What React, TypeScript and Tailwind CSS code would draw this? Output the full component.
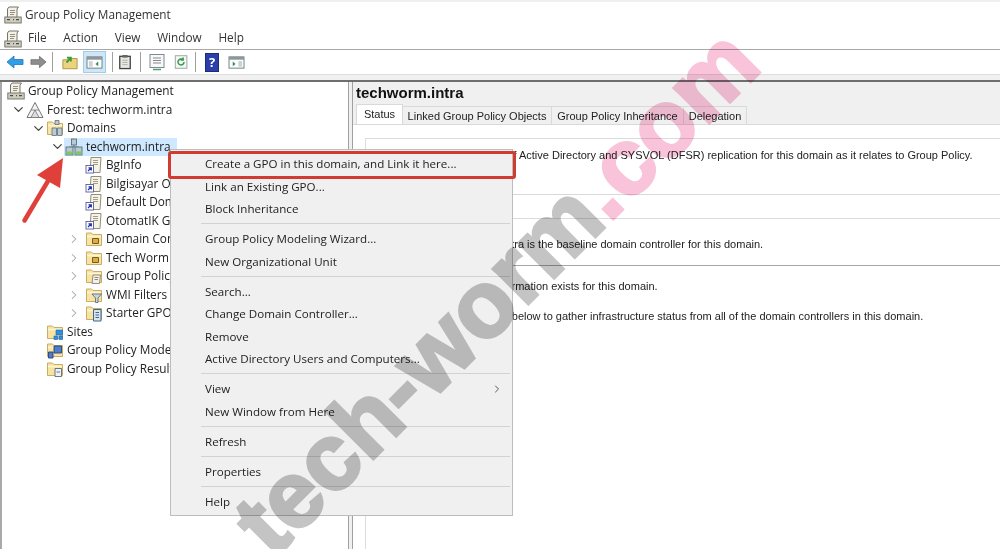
import React from 'react';
import { ChevronDown, ChevronRight } from 'lucide-react';

const uiFont = { fontFamily: '"Open Sans", "Noto Sans", sans-serif' };
const tightFont = { fontFamily: '"Liberation Sans", Arial, sans-serif' };

const Paper: React.FC<{ className?: string }> = ({ className }) => (
  <svg viewBox="0 0 18 18" className={className ?? 'w-[18px] h-[18px] shrink-0'}>
    <path d="M5 1h9.5l-1.5 2v9H3.5V3z" fill="#f4f1e4" stroke="#77756a" strokeWidth="1" />
    <path d="M6 4.5h5M6 6.5h5M6 8.5h4" stroke="#77756a" strokeWidth="0.8" />
    <rect x="0.8" y="11" width="16.4" height="6" fill="#cfccbf" stroke="#6f6f68" strokeWidth="0.9" />
    <path d="M3 13.7h3M9 13.7h1M12 13.7h3" stroke="#4c4c47" strokeWidth="1.3" />
  </svg>
);

const Forest = () => (
  <svg viewBox="0 0 18 18" className="w-[18px] h-[18px] shrink-0">
    <path d="M9 1.5L17 16.5H1z" fill="#f3f3f3" stroke="#77777a" strokeWidth="1" />
    <path d="M9 9L5 16.5h8zM5 9h8" fill="#dcdcdc" stroke="#77777a" strokeWidth="0.8" />
  </svg>
);

const Folder: React.FC<{ badge?: 'server' | 'box' | 'doc' | 'filter' | 'starter' | 'sites' | 'model' | 'result' }> = ({ badge }) => (
  <svg viewBox="0 0 18 18" className="w-[18px] h-[18px] shrink-0">
    <path d="M1.5 15.5V3h5l1.5 1.5h8.5v11z" fill="#f7e3a4" stroke="#c9ad62" strokeWidth="1" />
    <path d="M2 6.5h14" stroke="#fdf4d2" strokeWidth="1.5" />
    {badge === 'server' && <path d="M9 1.5h4v4H9zM6 9h4.5v7.5H6zM11.5 9H16v7.5h-4.5z" fill="#b8cbd6" stroke="#5f6f78" strokeWidth="0.8" />}
    {badge === 'box' && <path d="M7.5 8.5h6v5h-6z" fill="#d8ad4d" stroke="#7b5c1b" strokeWidth="1" />}
    {badge === 'doc' && <path d="M8 8h7.5l-1 8.5H7zM9.5 10.5h4M9.5 12.5h3.5" fill="#f3f1e6" stroke="#75736a" strokeWidth="0.8" />}
    {badge === 'filter' && <path d="M7 8h9.5l-3.5 4v4.5h-2.5V12z" fill="#c7d7e2" stroke="#60717d" strokeWidth="0.9" />}
    {badge === 'starter' && <path d="M8.5 5.5H16V17H8.5zM10.5 8.5h3.5M10.5 11h3.5M10.5 13.5h3.5" fill="#d6e4f2" stroke="#40658c" strokeWidth="1" />}
    {badge === 'sites' && <path d="M10 7h6.5v5H10zM8 13h3.5v3.5H8zM13 13h3.5v3.5H13z" fill="#2f8fe0" stroke="#1b66ad" strokeWidth="0.6" />}
    {badge === 'model' && <path d="M8 5h7.5v7H8zM2.5 11H7v6H2.5z" fill="#4c7fc4" stroke="#2c3e77" strokeWidth="0.9" />}
    {badge === 'result' && <path d="M9 8.5h6.5v8H9zM10.5 12h3.5" fill="#eef1f5" stroke="#5a6a7a" strokeWidth="0.9" />}
  </svg>
);

const DomainIcon = () => (
  <svg viewBox="0 0 18 18" className="w-[18px] h-[18px] shrink-0">
    <rect x="6.5" y="1" width="5" height="6" fill="#b9c9d4" stroke="#52626b" strokeWidth="0.8" />
    <path d="M9 7v2M4.5 9h9" stroke="#52626b" strokeWidth="0.8" />
    <rect x="1" y="9" width="7" height="8" fill="#b9c9d4" stroke="#52626b" strokeWidth="0.8" />
    <rect x="10" y="9" width="7" height="8" fill="#b9c9d4" stroke="#52626b" strokeWidth="0.8" />
    <rect x="1.5" y="13.5" width="6" height="3" fill="#7ecb5a" />
    <rect x="10.5" y="13.5" width="6" height="3" fill="#7ecb5a" />
  </svg>
);

const GpoLink = () => (
  <svg viewBox="0 0 18 18" className="w-[18px] h-[18px] shrink-0">
    <path d="M6 1.5h10l-1 15H5z" fill="#f6f3e4" stroke="#86836f" strokeWidth="0.9" />
    <path d="M8 4.5h5M8 6.5h5M8 8.5h5" stroke="#8a8878" strokeWidth="0.8" />
    <rect x="1" y="9.5" width="7.5" height="7.5" fill="#fff" stroke="#5a5aa0" strokeWidth="0.9" />
    <path d="M3 15l3-3M3.5 11.8H6.3V14.6" fill="none" stroke="#1c2fa6" strokeWidth="1.2" />
  </svg>
);

const Chevron: React.FC<{ open?: boolean }> = ({ open }) =>
  open ? (
    <span className="w-[16px] shrink-0 flex items-center justify-center">
      <ChevronDown size={15} strokeWidth={2} color="#444" />
    </span>
  ) : (
    <span className="w-[19px] shrink-0 flex items-center pl-[1px]">
      <ChevronRight size={14} strokeWidth={1.8} color="#a6a6a6" />
    </span>
  );

type TreeRow = { label: string; depth: number; chevron?: 'open' | 'closed'; icon: React.ReactNode; selected?: boolean };

const treeRows: TreeRow[] = [
  { label: 'Group Policy Management', depth: 5, icon: <Paper /> },
  { label: 'Forest: techworm.intra', depth: 8, chevron: 'open', icon: <Forest /> },
  { label: 'Domains', depth: 28, chevron: 'open', icon: <Folder badge="server" /> },
  { label: 'techworm.intra', depth: 47, chevron: 'open', icon: <DomainIcon />, selected: true },
  { label: 'BgInfo', depth: 83, icon: <GpoLink /> },
  { label: 'Bilgisayar Ortamı', depth: 83, icon: <GpoLink /> },
  { label: 'Default Domain Policy', depth: 83, icon: <GpoLink /> },
  { label: 'OtomatIK Guncelleme', depth: 83, icon: <GpoLink /> },
  { label: 'Domain Controllers', depth: 64, chevron: 'closed', icon: <Folder badge="box" /> },
  { label: 'Tech Worm', depth: 64, chevron: 'closed', icon: <Folder badge="box" /> },
  { label: 'Group Policy Objects', depth: 64, chevron: 'closed', icon: <Folder badge="doc" /> },
  { label: 'WMI Filters', depth: 64, chevron: 'closed', icon: <Folder badge="filter" /> },
  { label: 'Starter GPOs', depth: 64, chevron: 'closed', icon: <Folder badge="starter" /> },
  { label: 'Sites', depth: 44, icon: <Folder badge="sites" /> },
  { label: 'Group Policy Modeling', depth: 44, icon: <Folder badge="model" /> },
  { label: 'Group Policy Results', depth: 44, icon: <Folder badge="result" /> },
];

const menuItems: (string | null)[] = [
  'Create a GPO in this domain, and Link it here...',
  'Link an Existing GPO...',
  'Block Inheritance',
  null,
  'Group Policy Modeling Wizard...',
  'New Organizational Unit',
  null,
  'Search...',
  'Change Domain Controller...',
  'Remove',
  'Active Directory Users and Computers...',
  null,
  'View',
  'New Window from Here',
  null,
  'Refresh',
  null,
  'Properties',
  null,
  'Help',
];

const ToolSep: React.FC<{ className: string }> = ({ className }) => <div className={`w-px h-[20px] bg-[#a0a0a0] ${className}`} />;

const Toolbar = () => (
  <div className="h-[24px] flex items-center pl-[6px] bg-white shrink-0">
    <svg viewBox="0 0 18 14" className="w-[18px] h-[16px]">
      <path d="M8 1L1 7l7 6V9.5h9v-5H8z" fill="#2f9ee8" stroke="#2275b5" strokeWidth="0.8" strokeLinejoin="round" />
    </svg>
    <svg viewBox="0 0 18 14" className="w-[17px] h-[16px] ml-[6px]">
      <path d="M10 1l7 6-7 6V9.5H1v-5h9z" fill="#8e8e8e" stroke="#6d6d6d" strokeWidth="0.8" strokeLinejoin="round" />
    </svg>
    <ToolSep className="ml-[5px]" />
    <svg viewBox="0 0 18 18" className="w-[16px] h-[17px] ml-[9px]">
      <path d="M1 16V6h5l1-1.5h10V16z" fill="#ecd37e" stroke="#a98f3e" />
      <path d="M5 9l5-5M10 8V3.5H5.5" fill="none" stroke="#3d9a3a" strokeWidth="2" />
    </svg>
    <div className="w-[23px] h-[22px] ml-[5px] bg-[#cfe6f7] border border-[#9fcdee] flex items-center justify-center">
      <svg viewBox="0 0 18 16" className="w-[17px] h-[15px]">
        <rect x="1" y="2" width="16" height="12" fill="#fff" stroke="#6f7a80" />
        <rect x="1" y="2" width="16" height="3" fill="#8d979c" />
        <rect x="3" y="6.5" width="4" height="6" fill="#c9d2d6" />
        <path d="M13 7v5l-3-2.5z" fill="#2f8f5a" />
      </svg>
    </div>
    <ToolSep className="ml-[6px]" />
    <svg viewBox="0 0 16 18" className="w-[14px] h-[18px] ml-[5px]">
      <rect x="2" y="2.5" width="12" height="14" fill="#e9e7e2" stroke="#444" strokeWidth="1.5" />
      <path d="M5 7h6M5 9.5h6M5 12h6" stroke="#9a9a9a" strokeWidth="0.8" />
      <rect x="5" y="1" width="6" height="3" fill="#666" />
    </svg>
    <ToolSep className="ml-[8px]" />
    <svg viewBox="0 0 18 18" className="w-[18px] h-[18px] ml-[7px]">
      <rect x="2" y="1.5" width="14" height="13" fill="#f8f8f8" stroke="#7b8b94" />
      <path d="M5 5h8M5 7.5h8M5 10h8" stroke="#8a8a8a" />
      <path d="M5 16.5h8" stroke="#4aa06a" strokeWidth="1.5" />
    </svg>
    <svg viewBox="0 0 18 18" className="w-[15px] h-[18px] ml-[8px]">
      <rect x="1.5" y="1.5" width="14" height="15" fill="#f6f6f6" stroke="#8b9a93" />
      <path d="M12 9a3.6 3.6 0 1 1-1.2-2.7M11 3.5v3H8" fill="none" stroke="#2f9a46" strokeWidth="1.7" />
    </svg>
    <ToolSep className="ml-[6px]" />
    <div className="w-[14px] h-[19px] ml-[9px] bg-[#2b3fa8] border border-[#1c2a78] flex items-center justify-center text-white text-[13px] font-bold leading-none">?</div>
    <svg viewBox="0 0 18 16" className="w-[17px] h-[15px] ml-[9px]">
      <rect x="1" y="2" width="16" height="12" fill="#fff" stroke="#6f7a80" />
      <rect x="1" y="2" width="16" height="3" fill="#8d979c" />
      <rect x="11" y="6.5" width="4" height="6" fill="#c9d2d6" />
      <path d="M5 7v5l3-2.5z" fill="#2f8f5a" />
    </svg>
  </div>
);

const App: React.FC = () => {
  return (
    <div className="relative w-[1000px] h-[549px] overflow-hidden bg-white text-[11.8px] text-[#222]" style={uiFont}>
      <div className="h-[2px] bg-[#efefef]" />
      {/* title + menu */}
      <div className="h-[26px] flex items-center pl-[4px] gap-[3px] text-[#333]">
        <Paper />
        <span>Group Policy Management</span>
      </div>
      <div className="h-[22px] flex items-center pl-[4px] border-b border-[#a8a8a8]">
        <Paper />
        <div className="flex ml-[6px] gap-[16.7px] text-[#333] -mt-[2px]">
          <span>File</span>
          <span>Action</span>
          <span>View</span>
          <span>Window</span>
          <span>Help</span>
        </div>
      </div>
      <Toolbar />
      <div className="h-[8px] bg-[#f0f0f0] border-t border-[#dedede] border-b-2 border-b-[#6e6e6e]" />

      <div className="flex h-[467px]">
        {/* tree */}
        <div className="w-[349px] border-l-2 border-[#a9a9a9] border-r border-r-[#a0a0a0] overflow-hidden shrink-0">
          {treeRows.map((row) => (
            <div key={row.label} className="h-[18.5px] flex items-center whitespace-nowrap" style={{ paddingLeft: row.depth }}>
              {row.chevron && <Chevron open={row.chevron === 'open'} />}
              <div className={`flex items-center ${row.selected ? 'bg-[#cde8ff] h-[18px] pr-[6px] -ml-[1px] pl-[1px]' : ''}`}>
                {row.icon}
                <span className="ml-[3px]">{row.label}</span>
              </div>
            </div>
          ))}
        </div>
        <div className="w-[3px] bg-[#f0f0f0] shrink-0" />
        {/* details */}
        <div className="flex-1 border-l border-[#a0a0a0] flex flex-col min-w-0" style={tightFont}>
          <div className="h-[24px] pl-[3px] pb-[2px] flex items-center bg-[#f0f0f0] text-[15px] font-bold text-[#111] shrink-0">techworm.intra</div>
          <div className="h-[19px] bg-[#f0f0f0] flex items-end pl-[3px] border-b border-[#d9d9d9] shrink-0 text-[11px] whitespace-nowrap">
            <div className="h-[20px] w-[47px] bg-white border border-[#d9d9d9] border-b-0 flex items-center justify-center">Status</div>
            <div className="h-[18px] w-[149px] bg-[#f0f0f0] border-t border-r border-[#d9d9d9] flex items-center justify-center pt-[2px]">Linked Group Policy Objects</div>
            <div className="h-[18px] w-[132px] bg-[#f0f0f0] border-t border-r border-[#d9d9d9] flex items-center justify-center pt-[2px]">Group Policy Inheritance</div>
            <div className="h-[18px] w-[63px] bg-[#f0f0f0] border-t border-r border-[#d9d9d9] flex items-center justify-center pt-[2px]">Delegation</div>
          </div>
          <div className="relative flex-1 text-[11px]">
            <div className="absolute left-[12px] right-0 top-[13px] h-[412px] border-l border-t border-[#dcdcdc]">
              <div className="absolute left-[5px] top-[8px] whitespace-nowrap">This page shows the status of Active Directory and SYSVOL (DFSR) replication for this domain as it relates to Group Policy.</div>
              <div className="absolute left-0 right-0 top-[55px] h-px bg-[#d9d9d9]" />
              <div className="absolute left-0 right-0 top-[79px] h-px bg-[#dcdcdc]" />
              <div className="absolute left-[59px] top-[97px] whitespace-nowrap">dc01.techworm.intra is the baseline domain controller for this domain.</div>
              <div className="absolute left-0 right-0 top-[126px] h-px bg-[#a6a6a6]" />
              <div className="absolute left-[11px] top-[139px] whitespace-nowrap">No infrastructure status information exists for this domain.</div>
              <div className="absolute left-[7px] top-[169px] whitespace-nowrap">Click the Detect Now button below to gather infrastructure status from all of the domain controllers in this domain.</div>
            </div>
          </div>
        </div>
      </div>

      {/* context menu */}
      <div className="absolute left-[170px] top-[149px] w-[343px] h-[367px] bg-[#f0f0f0] border border-[#bdbdbd] pt-[2.5px] text-[11.6px]">
        {menuItems.map((item, i) =>
          item === null ? (
            <div key={i} className="h-[7.5px] ml-[30px] mr-[2px] flex items-center">
              <div className="h-px w-full bg-[#d2d2d2]" />
            </div>
          ) : (
            <div key={i} className="h-[22.5px] pl-[34px] pr-[9px] flex items-center justify-between text-[#222] whitespace-nowrap">
              <span>{item}</span>
              {item === 'View' && <ChevronRight size={12} strokeWidth={1.8} color="#444" />}
            </div>
          ),
        )}
      </div>

      {/* watermark sits over the whole window */}
      <div
        className="absolute left-[250px] top-[490px] origin-left -rotate-[45deg] whitespace-nowrap text-[94px] leading-none font-bold mix-blend-multiply pointer-events-none"
        style={tightFont}
      >
        <span className="text-[#c4c4c4] [-webkit-text-stroke:3px_#c4c4c4]">tech-worm</span>
        <span className="text-[#f9c4da] [-webkit-text-stroke:3px_#f9c4da]">.com</span>
      </div>

      {/* annotations */}
      <div className="absolute left-[168px] top-[151px] w-[348px] h-[28px] border-[3px] border-[#d23b30] rounded-[3px]" />
      <svg viewBox="0 0 50 70" className="absolute left-[20px] top-[157px] w-[50px] h-[70px]">
        <path d="M4.5 63.5L28 24" stroke="#e0403a" strokeWidth="4.5" strokeLinecap="round" />
        <path d="M43 1L17 18l23 13z" fill="#e0403a" />
      </svg>
    </div>
  );
};

export default App;
